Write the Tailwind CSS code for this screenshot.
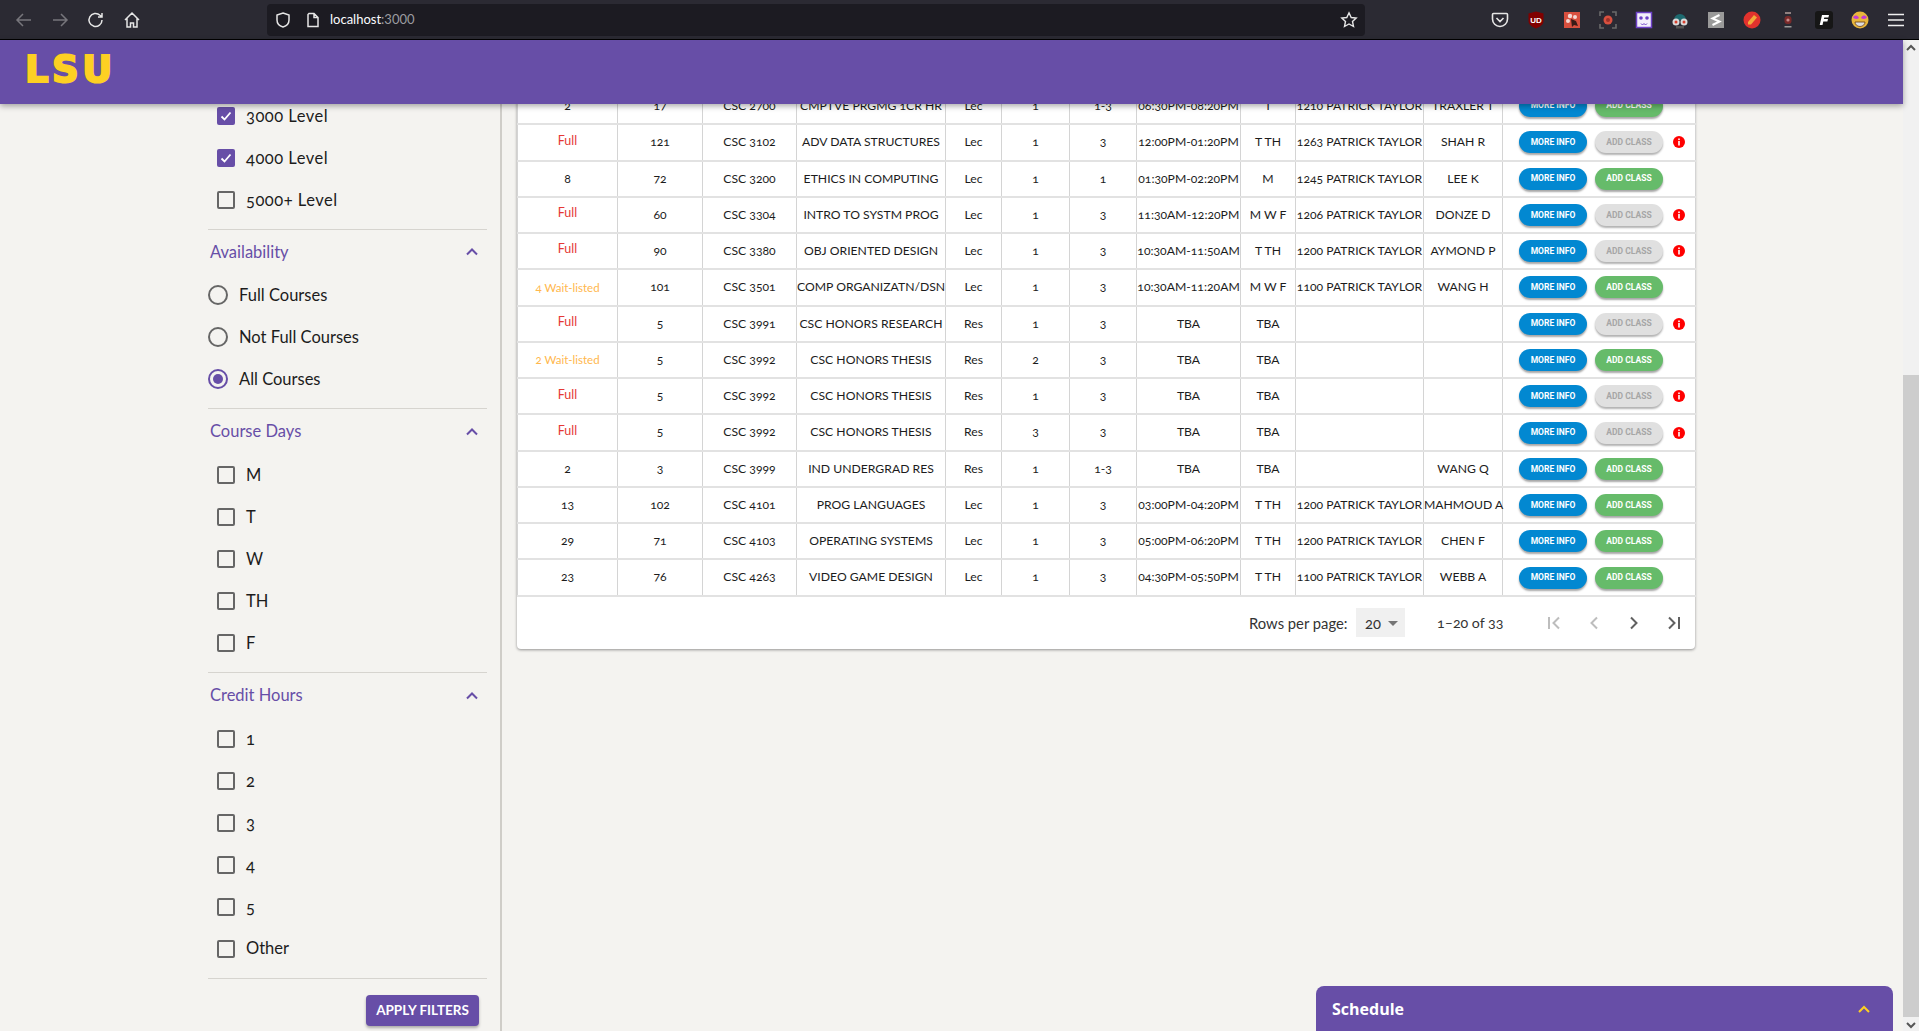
<!DOCTYPE html>
<html><head><meta charset="utf-8"><script src="https://cdn.jsdelivr.net/npm/@tailwindcss/browser@4"></script></head>
<body class="m-0 overflow-hidden bg-[#f4f3f0]">
<div class="flex h-[1031px] w-[1919px] flex-col overflow-hidden font-['Lato',sans-serif] oldstyle-nums text-[#1c1c1c]">
<!-- browser toolbar -->
<div class="flex h-[40px] shrink-0 items-center border-b border-black bg-[#2b2a33] text-[#e6e6e6]">
 <div class="flex w-[267px] items-center gap-[16px] pl-[14px]">
  <svg class="size-[20px] text-[#77767c]" viewBox="0 0 20 20" fill="none" stroke="currentColor" stroke-width="1.5"><path d="M17 10H3M9 4l-6 6 6 6"/></svg>
  <svg class="size-[20px] text-[#77767c]" viewBox="0 0 20 20" fill="none" stroke="currentColor" stroke-width="1.5"><path d="M3 10h14M11 4l6 6-6 6"/></svg>
  <svg class="size-[20px]" viewBox="0 0 20 20" fill="none" stroke="currentColor" stroke-width="1.5"><path d="M16 10a6.5 6.5 0 1 1-2-4.7L16 7M16 3v4h-4"/></svg>
  <svg class="size-[20px]" viewBox="0 0 20 20" fill="none" stroke="currentColor" stroke-width="1.5"><path d="M3 10l7-7 7 7M5 8.500V17h3.500v-4h3v4H15V8.500"/></svg>
 </div>
 <div class="flex h-[32px] w-[1098px] items-center rounded-[4px] bg-[#1c1b22] pl-[7px] pr-[7px]">
  <svg class="size-[18px]" viewBox="0 0 18 18" fill="none" stroke="currentColor" stroke-width="1.500"><path d="M9 2l6 2v5c0 3.500-2.500 6-6 7-3.500-1-6-3.500-6-7V4z"/></svg>
  <svg class="ml-[13px] size-[16px]" viewBox="0 0 16 16" fill="none" stroke="currentColor" stroke-width="1.500"><path d="M4 1.500h5l4 4V14.500H3V2.500zM9 1.500v4h4"/></svg>
  <span class="ml-[9px] text-[13px] lining-nums text-[#fbfbfe]">localhost<span class="text-[#9b9ba0]">:3000</span></span>
  <svg class="ml-auto size-[18px]" viewBox="0 0 18 18" fill="none" stroke="currentColor" stroke-width="1.400"><path d="M9 1.800l2.200 4.700 5 .6-3.700 3.400 1 5L9 13l-4.500 2.500 1-5L1.800 7.100l5-.6z"/></svg>
 </div>
 <div class="ml-[125px] flex items-center gap-[16px]">
  <svg class="size-[20px]" viewBox="0 0 20 20" fill="none" stroke="currentColor" stroke-width="1.600"><path d="M3.500 3.500h13a1 1 0 0 1 1 1V9a7.500 7.500 0 0 1-15 0V4.500a1 1 0 0 1 1-1zM6.500 8l3.500 3.500L13.500 8"/></svg>
  <svg class="size-[20px]" viewBox="0 0 20 20"><path d="M10 1.500l7.500 2v7.500c0 3.500-3 5.500-7.500 7.500-4.500-2-7.500-4-7.500-7.500V3.500z" fill="#800000"/><text x="10" y="12.500" text-anchor="middle" font-size="8" font-weight="700" fill="#fff" font-family="Liberation Sans">UD</text></svg>
  <svg class="size-[20px]" viewBox="0 0 20 20"><rect x="2" y="2" width="16" height="16" fill="#d8503f"/><circle cx="8" cy="6" r="2.200" fill="#f4d9d4"/><circle cx="13" cy="7" r="2" fill="#f4d9d4"/><circle cx="6" cy="11" r="2" fill="#f4d9d4"/><path d="M9 9l5 2 2 5-4-1-2 2z" fill="#3a1b17"/></svg>
  <svg class="size-[20px]" viewBox="0 0 20 20" fill="none"><path d="M2 6V2h4M14 2h4v4M18 14v4h-4M6 18H2v-4" stroke="#6a6a6a" stroke-width="1.600"/><circle cx="10" cy="10" r="4.500" fill="#d8503f"/><circle cx="10" cy="10" r="2" fill="#a03028"/></svg>
  <svg class="size-[20px]" viewBox="0 0 20 20"><rect x="2.500" y="2.500" width="15" height="15" fill="#f3f0fb" stroke="#6d42c7" stroke-width="1.500"/><circle cx="7" cy="8" r="1.800" fill="#6d42c7"/><circle cx="13" cy="8" r="1.800" fill="#6d42c7"/><path d="M7 13.500l1.500 1.500L10 13.500l1.500 1.500L13 13.500" stroke="#6d42c7" fill="none"/></svg>
  <svg class="size-[20px]" viewBox="0 0 20 20"><path d="M4 10a6 6 0 0 1 12 0z" fill="#1d6a70"/><circle cx="6" cy="12" r="3.500" fill="#d9d9d9"/><circle cx="14" cy="12" r="3.500" fill="#d9d9d9"/><circle cx="6" cy="12" r="1.500" fill="#d8402f"/><circle cx="14" cy="12" r="1.500" fill="#d8402f"/><rect x="6" y="16" width="8" height="2.500" fill="#555"/></svg>
  <svg class="size-[20px]" viewBox="0 0 20 20"><rect x="2" y="2" width="16" height="16" fill="#9a9a9a"/><path d="M13.500 5L6.500 8.500l7 3-7 3.500" stroke="#fff" stroke-width="2" fill="none"/></svg>
  <svg class="size-[20px]" viewBox="0 0 20 20"><circle cx="10" cy="10" r="8.500" fill="#e2322d"/><path d="M6 12l6-7 3 2.500-6 7H6z" fill="#f3a93a"/></svg>
  <svg class="size-[20px]" viewBox="0 0 20 20"><rect x="7" y="2" width="6" height="2" fill="#8f8080"/><rect x="6.500" y="6" width="7" height="8" rx="3" fill="#7a2a2a"/><circle cx="10" cy="10" r="1.600" fill="#c88a8a"/><rect x="6.500" y="16" width="7" height="1.500" fill="#999"/></svg>
  <svg class="size-[20px]" viewBox="0 0 20 20"><rect x="1" y="1" width="18" height="18" rx="3" fill="#161616"/><path d="M8 5h7l-.6 2.400H10.300L9.900 9H14l-.6 2.400H9.300L8.500 15H5.700z" fill="#fff"/></svg>
  <svg class="size-[20px]" viewBox="0 0 20 20"><circle cx="10" cy="10" r="8.500" fill="#e8b63c"/><path d="M3 7.500c2-3 5-2.500 6 .5-2 1.500-5 1-6-.5zM17 7.500c-2-3-5-2.500-6 .5 2 1.500 5 1 6-.5z" fill="#c43ad6"/><path d="M5 12h10a5 4.500 0 0 1-10 0z" fill="#ddd" stroke="#6b3d10" stroke-width=".8"/></svg>
  <svg class="size-[20px]" viewBox="0 0 20 20" stroke="#f0f0f0" stroke-width="1.600"><path d="M2 4.500h16M2 10h16M2 15.500h16"/></svg>
 </div>
</div>
<!-- page -->
<div class="relative flex min-h-0 flex-1">
 <div class="relative min-h-0 flex-1">
  <!-- app bar over content -->
  <div class="absolute inset-x-0 top-0 z-20 flex h-[64px] items-center bg-[#674ea7] pb-[5px] pl-[25px] shadow-[0_2px_6px_rgba(0,0,0,0.35)]">
   <span class="font-['DejaVu_Sans',sans-serif] text-[37px] leading-none font-bold tracking-[3.500px] text-[#fdd023] [-webkit-text-stroke:2px_#fdd023]">LSU</span>
  </div>
  <div class="flex h-full overflow-hidden">
   <!-- filters -->
   <aside class="flex h-full w-[502px] shrink-0 flex-col items-end border-r-2 border-[#cfcdc8] pr-[13px] pt-[55px] text-[16.500px]">
    <div class="w-[279px]">
     <div class="flex h-[42px] items-center pl-[9px]"><span class="flex size-[18px] items-center justify-center rounded-[2px] bg-[#674ea7]"><svg class="size-[14px]" viewBox="0 0 14 14" fill="none" stroke="#fff" stroke-width="1.800"><path d="M2.500 7.500l3 3 6-7"/></svg></span><span class="ml-[11px] tracking-[0.5px]">3000 Level</span></div>
     <div class="flex h-[42px] items-center pl-[9px]"><span class="flex size-[18px] items-center justify-center rounded-[2px] bg-[#674ea7]"><svg class="size-[14px]" viewBox="0 0 14 14" fill="none" stroke="#fff" stroke-width="1.800"><path d="M2.500 7.500l3 3 6-7"/></svg></span><span class="ml-[11px] tracking-[0.5px]">4000 Level</span></div>
     <div class="flex h-[42px] items-center pl-[9px]"><span class="size-[18px] rounded-[2px] border-2 border-[#666]"></span><span class="ml-[11px] tracking-[0.5px]">5000+ Level</span></div>
     <div class="mt-[8px] border-t border-[#d6d4cf]"></div>
     <div class="flex h-[44px] items-center justify-between pl-[2px] pr-[8px] text-[#674ea7]"><span>Availability</span><svg class="size-[14px]" viewBox="0 0 14 14" fill="none" stroke="currentColor" stroke-width="2"><path d="M2 9.500L7 4.500l5 5"/></svg></div>
     <div class="flex h-[42px] items-center"><span class="size-[20px] rounded-full border-2 border-[#666]"></span><span class="ml-[11px]">Full Courses</span></div>
     <div class="flex h-[42px] items-center"><span class="size-[20px] rounded-full border-2 border-[#666]"></span><span class="ml-[11px]">Not Full Courses</span></div>
     <div class="flex h-[42px] items-center"><span class="flex size-[20px] items-center justify-center rounded-full border-2 border-[#674ea7]"><span class="size-[10px] rounded-full bg-[#674ea7]"></span></span><span class="ml-[11px]">All Courses</span></div>
     <div class="mt-[8px] border-t border-[#d6d4cf]"></div>
     <div class="flex h-[45px] items-center justify-between pl-[2px] pr-[8px] text-[#674ea7]"><span>Course Days</span><svg class="size-[14px]" viewBox="0 0 14 14" fill="none" stroke="currentColor" stroke-width="2"><path d="M2 9.500L7 4.500l5 5"/></svg></div>
     <div class="flex h-[42px] items-center pl-[9px]"><span class="size-[18px] rounded-[2px] border-2 border-[#666]"></span><span class="ml-[11px]">M</span></div>
     <div class="flex h-[42px] items-center pl-[9px]"><span class="size-[18px] rounded-[2px] border-2 border-[#666]"></span><span class="ml-[11px]">T</span></div>
     <div class="flex h-[42px] items-center pl-[9px]"><span class="size-[18px] rounded-[2px] border-2 border-[#666]"></span><span class="ml-[11px]">W</span></div>
     <div class="flex h-[42px] items-center pl-[9px]"><span class="size-[18px] rounded-[2px] border-2 border-[#666]"></span><span class="ml-[11px]">TH</span></div>
     <div class="flex h-[42px] items-center pl-[9px]"><span class="size-[18px] rounded-[2px] border-2 border-[#666]"></span><span class="ml-[11px]">F</span></div>
     <div class="mt-[8px] border-t border-[#d6d4cf]"></div>
     <div class="flex h-[45px] items-center justify-between pl-[2px] pr-[8px] text-[#674ea7]"><span>Credit Hours</span><svg class="size-[14px]" viewBox="0 0 14 14" fill="none" stroke="currentColor" stroke-width="2"><path d="M2 9.500L7 4.500l5 5"/></svg></div>
     <div class="flex h-[42px] items-center pl-[9px]"><span class="size-[18px] rounded-[2px] border-2 border-[#666]"></span><span class="ml-[11px]">1</span></div>
     <div class="flex h-[42px] items-center pl-[9px]"><span class="size-[18px] rounded-[2px] border-2 border-[#666]"></span><span class="ml-[11px]">2</span></div>
     <div class="flex h-[42px] items-center pl-[9px]"><span class="size-[18px] rounded-[2px] border-2 border-[#666]"></span><span class="ml-[11px]">3</span></div>
     <div class="flex h-[42px] items-center pl-[9px]"><span class="size-[18px] rounded-[2px] border-2 border-[#666]"></span><span class="ml-[11px]">4</span></div>
     <div class="flex h-[42px] items-center pl-[9px]"><span class="size-[18px] rounded-[2px] border-2 border-[#666]"></span><span class="ml-[11px]">5</span></div>
     <div class="flex h-[41px] items-center pl-[9px]"><span class="size-[18px] rounded-[2px] border-2 border-[#666]"></span><span class="ml-[11px]">Other</span></div>
     <div class="mt-[9px] border-t border-[#d6d4cf]"></div>
     <div class="flex justify-end pr-[8px] pt-[16px]"><span class="flex h-[31px] w-[113px] items-center justify-center rounded-[4px] bg-[#674ea7] text-[13.500px] font-bold text-white shadow-[0_2px_3px_rgba(0,0,0,0.3)]">APPLY FILTERS</span></div>
    </div>
   </aside>
   <!-- results -->
   <main class="min-w-0 flex-1 pl-[15px] pt-[48px]">
    <div class="w-[1178px] rounded-b-[4px] bg-white shadow-[0_1px_3px_rgba(0,0,0,0.4)]">
     <table class="w-full table-fixed border-collapse text-center text-[12.200px] leading-none [&_td]:whitespace-nowrap [&_td]:border-x [&_td]:border-x-[#d4d4d4] [&_tr]:h-[36.280px] [&_tr]:border-b-2 [&_tr]:border-b-[#e2e2e2]">
      <colgroup><col class="w-[100px]"><col class="w-[85px]"><col class="w-[94px]"><col class="w-[149px]"><col class="w-[56px]"><col class="w-[68px]"><col class="w-[67px]"><col class="w-[104px]"><col class="w-[55px]"><col class="w-[128px]"><col class="w-[79px]"><col class="w-[193px]"></colgroup>
      <tbody>
       <tr><td>2</td><td>17</td><td>CSC 2700</td><td>CMPTVE PRGMG 1CR HR</td><td>Lec</td><td>1</td><td>1-3</td><td>06:30PM-08:20PM</td><td>T</td><td>1210 PATRICK TAYLOR</td><td>TRAXLER T</td><td><div class="flex items-center gap-[8px] pl-[16px]"><span class="flex h-[22px] w-[68px] items-center justify-center rounded-full bg-[#0288d1] font-['Roboto',sans-serif] text-[8.500px] font-bold text-white shadow-[0_2px_2px_rgba(0,0,0,0.35)]">MORE INFO</span><span class="flex h-[22px] w-[68px] items-center justify-center rounded-full bg-[#66bb6a] font-['Roboto',sans-serif] text-[8.500px] font-bold text-white shadow-[0_2px_2px_rgba(0,0,0,0.35)]">ADD CLASS</span></div></td></tr>
       <tr><td class="pb-[3px] text-[12.500px] text-[#e53935]">Full</td><td>121</td><td>CSC 3102</td><td>ADV DATA STRUCTURES</td><td>Lec</td><td>1</td><td>3</td><td>12:00PM-01:20PM</td><td>T TH</td><td>1263 PATRICK TAYLOR</td><td>SHAH R</td><td><div class="flex items-center gap-[8px] pl-[16px]"><span class="flex h-[22px] w-[68px] items-center justify-center rounded-full bg-[#0288d1] font-['Roboto',sans-serif] text-[8.500px] font-bold text-white shadow-[0_2px_2px_rgba(0,0,0,0.35)]">MORE INFO</span><span class="flex h-[22px] w-[68px] items-center justify-center rounded-full bg-[#e0e0e0] font-['Roboto',sans-serif] text-[8.500px] font-bold text-[#a6a6a6] shadow-[0_2px_2px_rgba(0,0,0,0.3)]">ADD CLASS</span><svg class="ml-[2px] size-[12px]" viewBox="0 0 12 12"><circle cx="6" cy="6" r="6" fill="#f00"/><rect x="5.200" y="5" width="1.600" height="4.500" fill="#fff"/><rect x="5.200" y="2.500" width="1.600" height="1.600" fill="#fff"/></svg></div></td></tr>
       <tr><td>8</td><td>72</td><td>CSC 3200</td><td>ETHICS IN COMPUTING</td><td>Lec</td><td>1</td><td>1</td><td>01:30PM-02:20PM</td><td>M</td><td>1245 PATRICK TAYLOR</td><td>LEE K</td><td><div class="flex items-center gap-[8px] pl-[16px]"><span class="flex h-[22px] w-[68px] items-center justify-center rounded-full bg-[#0288d1] font-['Roboto',sans-serif] text-[8.500px] font-bold text-white shadow-[0_2px_2px_rgba(0,0,0,0.35)]">MORE INFO</span><span class="flex h-[22px] w-[68px] items-center justify-center rounded-full bg-[#66bb6a] font-['Roboto',sans-serif] text-[8.500px] font-bold text-white shadow-[0_2px_2px_rgba(0,0,0,0.35)]">ADD CLASS</span></div></td></tr>
       <tr><td class="pb-[3px] text-[12.500px] text-[#e53935]">Full</td><td>60</td><td>CSC 3304</td><td>INTRO TO SYSTM PROG</td><td>Lec</td><td>1</td><td>3</td><td>11:30AM-12:20PM</td><td>M W F</td><td>1206 PATRICK TAYLOR</td><td>DONZE D</td><td><div class="flex items-center gap-[8px] pl-[16px]"><span class="flex h-[22px] w-[68px] items-center justify-center rounded-full bg-[#0288d1] font-['Roboto',sans-serif] text-[8.500px] font-bold text-white shadow-[0_2px_2px_rgba(0,0,0,0.35)]">MORE INFO</span><span class="flex h-[22px] w-[68px] items-center justify-center rounded-full bg-[#e0e0e0] font-['Roboto',sans-serif] text-[8.500px] font-bold text-[#a6a6a6] shadow-[0_2px_2px_rgba(0,0,0,0.3)]">ADD CLASS</span><svg class="ml-[2px] size-[12px]" viewBox="0 0 12 12"><circle cx="6" cy="6" r="6" fill="#f00"/><rect x="5.200" y="5" width="1.600" height="4.500" fill="#fff"/><rect x="5.200" y="2.500" width="1.600" height="1.600" fill="#fff"/></svg></div></td></tr>
       <tr><td class="pb-[3px] text-[12.500px] text-[#e53935]">Full</td><td>90</td><td>CSC 3380</td><td>OBJ ORIENTED DESIGN</td><td>Lec</td><td>1</td><td>3</td><td>10:30AM-11:50AM</td><td>T TH</td><td>1200 PATRICK TAYLOR</td><td>AYMOND P</td><td><div class="flex items-center gap-[8px] pl-[16px]"><span class="flex h-[22px] w-[68px] items-center justify-center rounded-full bg-[#0288d1] font-['Roboto',sans-serif] text-[8.500px] font-bold text-white shadow-[0_2px_2px_rgba(0,0,0,0.35)]">MORE INFO</span><span class="flex h-[22px] w-[68px] items-center justify-center rounded-full bg-[#e0e0e0] font-['Roboto',sans-serif] text-[8.500px] font-bold text-[#a6a6a6] shadow-[0_2px_2px_rgba(0,0,0,0.3)]">ADD CLASS</span><svg class="ml-[2px] size-[12px]" viewBox="0 0 12 12"><circle cx="6" cy="6" r="6" fill="#f00"/><rect x="5.200" y="5" width="1.600" height="4.500" fill="#fff"/><rect x="5.200" y="2.500" width="1.600" height="1.600" fill="#fff"/></svg></div></td></tr>
       <tr><td class="text-[11.500px] text-[#ffb74d]">4 Wait-listed</td><td>101</td><td>CSC 3501</td><td>COMP ORGANIZATN/DSN</td><td>Lec</td><td>1</td><td>3</td><td>10:30AM-11:20AM</td><td>M W F</td><td>1100 PATRICK TAYLOR</td><td>WANG H</td><td><div class="flex items-center gap-[8px] pl-[16px]"><span class="flex h-[22px] w-[68px] items-center justify-center rounded-full bg-[#0288d1] font-['Roboto',sans-serif] text-[8.500px] font-bold text-white shadow-[0_2px_2px_rgba(0,0,0,0.35)]">MORE INFO</span><span class="flex h-[22px] w-[68px] items-center justify-center rounded-full bg-[#66bb6a] font-['Roboto',sans-serif] text-[8.500px] font-bold text-white shadow-[0_2px_2px_rgba(0,0,0,0.35)]">ADD CLASS</span></div></td></tr>
       <tr><td class="pb-[3px] text-[12.500px] text-[#e53935]">Full</td><td>5</td><td>CSC 3991</td><td>CSC HONORS RESEARCH</td><td>Res</td><td>1</td><td>3</td><td>TBA</td><td>TBA</td><td></td><td></td><td><div class="flex items-center gap-[8px] pl-[16px]"><span class="flex h-[22px] w-[68px] items-center justify-center rounded-full bg-[#0288d1] font-['Roboto',sans-serif] text-[8.500px] font-bold text-white shadow-[0_2px_2px_rgba(0,0,0,0.35)]">MORE INFO</span><span class="flex h-[22px] w-[68px] items-center justify-center rounded-full bg-[#e0e0e0] font-['Roboto',sans-serif] text-[8.500px] font-bold text-[#a6a6a6] shadow-[0_2px_2px_rgba(0,0,0,0.3)]">ADD CLASS</span><svg class="ml-[2px] size-[12px]" viewBox="0 0 12 12"><circle cx="6" cy="6" r="6" fill="#f00"/><rect x="5.200" y="5" width="1.600" height="4.500" fill="#fff"/><rect x="5.200" y="2.500" width="1.600" height="1.600" fill="#fff"/></svg></div></td></tr>
       <tr><td class="text-[11.500px] text-[#ffb74d]">2 Wait-listed</td><td>5</td><td>CSC 3992</td><td>CSC HONORS THESIS</td><td>Res</td><td>2</td><td>3</td><td>TBA</td><td>TBA</td><td></td><td></td><td><div class="flex items-center gap-[8px] pl-[16px]"><span class="flex h-[22px] w-[68px] items-center justify-center rounded-full bg-[#0288d1] font-['Roboto',sans-serif] text-[8.500px] font-bold text-white shadow-[0_2px_2px_rgba(0,0,0,0.35)]">MORE INFO</span><span class="flex h-[22px] w-[68px] items-center justify-center rounded-full bg-[#66bb6a] font-['Roboto',sans-serif] text-[8.500px] font-bold text-white shadow-[0_2px_2px_rgba(0,0,0,0.35)]">ADD CLASS</span></div></td></tr>
       <tr><td class="pb-[3px] text-[12.500px] text-[#e53935]">Full</td><td>5</td><td>CSC 3992</td><td>CSC HONORS THESIS</td><td>Res</td><td>1</td><td>3</td><td>TBA</td><td>TBA</td><td></td><td></td><td><div class="flex items-center gap-[8px] pl-[16px]"><span class="flex h-[22px] w-[68px] items-center justify-center rounded-full bg-[#0288d1] font-['Roboto',sans-serif] text-[8.500px] font-bold text-white shadow-[0_2px_2px_rgba(0,0,0,0.35)]">MORE INFO</span><span class="flex h-[22px] w-[68px] items-center justify-center rounded-full bg-[#e0e0e0] font-['Roboto',sans-serif] text-[8.500px] font-bold text-[#a6a6a6] shadow-[0_2px_2px_rgba(0,0,0,0.3)]">ADD CLASS</span><svg class="ml-[2px] size-[12px]" viewBox="0 0 12 12"><circle cx="6" cy="6" r="6" fill="#f00"/><rect x="5.200" y="5" width="1.600" height="4.500" fill="#fff"/><rect x="5.200" y="2.500" width="1.600" height="1.600" fill="#fff"/></svg></div></td></tr>
       <tr><td class="pb-[3px] text-[12.500px] text-[#e53935]">Full</td><td>5</td><td>CSC 3992</td><td>CSC HONORS THESIS</td><td>Res</td><td>3</td><td>3</td><td>TBA</td><td>TBA</td><td></td><td></td><td><div class="flex items-center gap-[8px] pl-[16px]"><span class="flex h-[22px] w-[68px] items-center justify-center rounded-full bg-[#0288d1] font-['Roboto',sans-serif] text-[8.500px] font-bold text-white shadow-[0_2px_2px_rgba(0,0,0,0.35)]">MORE INFO</span><span class="flex h-[22px] w-[68px] items-center justify-center rounded-full bg-[#e0e0e0] font-['Roboto',sans-serif] text-[8.500px] font-bold text-[#a6a6a6] shadow-[0_2px_2px_rgba(0,0,0,0.3)]">ADD CLASS</span><svg class="ml-[2px] size-[12px]" viewBox="0 0 12 12"><circle cx="6" cy="6" r="6" fill="#f00"/><rect x="5.200" y="5" width="1.600" height="4.500" fill="#fff"/><rect x="5.200" y="2.500" width="1.600" height="1.600" fill="#fff"/></svg></div></td></tr>
       <tr><td>2</td><td>3</td><td>CSC 3999</td><td>IND UNDERGRAD RES</td><td>Res</td><td>1</td><td>1-3</td><td>TBA</td><td>TBA</td><td></td><td>WANG Q</td><td><div class="flex items-center gap-[8px] pl-[16px]"><span class="flex h-[22px] w-[68px] items-center justify-center rounded-full bg-[#0288d1] font-['Roboto',sans-serif] text-[8.500px] font-bold text-white shadow-[0_2px_2px_rgba(0,0,0,0.35)]">MORE INFO</span><span class="flex h-[22px] w-[68px] items-center justify-center rounded-full bg-[#66bb6a] font-['Roboto',sans-serif] text-[8.500px] font-bold text-white shadow-[0_2px_2px_rgba(0,0,0,0.35)]">ADD CLASS</span></div></td></tr>
       <tr><td>13</td><td>102</td><td>CSC 4101</td><td>PROG LANGUAGES</td><td>Lec</td><td>1</td><td>3</td><td>03:00PM-04:20PM</td><td>T TH</td><td>1200 PATRICK TAYLOR</td><td>MAHMOUD A</td><td><div class="flex items-center gap-[8px] pl-[16px]"><span class="flex h-[22px] w-[68px] items-center justify-center rounded-full bg-[#0288d1] font-['Roboto',sans-serif] text-[8.500px] font-bold text-white shadow-[0_2px_2px_rgba(0,0,0,0.35)]">MORE INFO</span><span class="flex h-[22px] w-[68px] items-center justify-center rounded-full bg-[#66bb6a] font-['Roboto',sans-serif] text-[8.500px] font-bold text-white shadow-[0_2px_2px_rgba(0,0,0,0.35)]">ADD CLASS</span></div></td></tr>
       <tr><td>29</td><td>71</td><td>CSC 4103</td><td>OPERATING SYSTEMS</td><td>Lec</td><td>1</td><td>3</td><td>05:00PM-06:20PM</td><td>T TH</td><td>1200 PATRICK TAYLOR</td><td>CHEN F</td><td><div class="flex items-center gap-[8px] pl-[16px]"><span class="flex h-[22px] w-[68px] items-center justify-center rounded-full bg-[#0288d1] font-['Roboto',sans-serif] text-[8.500px] font-bold text-white shadow-[0_2px_2px_rgba(0,0,0,0.35)]">MORE INFO</span><span class="flex h-[22px] w-[68px] items-center justify-center rounded-full bg-[#66bb6a] font-['Roboto',sans-serif] text-[8.500px] font-bold text-white shadow-[0_2px_2px_rgba(0,0,0,0.35)]">ADD CLASS</span></div></td></tr>
       <tr><td>23</td><td>76</td><td>CSC 4263</td><td>VIDEO GAME DESIGN</td><td>Lec</td><td>1</td><td>3</td><td>04:30PM-05:50PM</td><td>T TH</td><td>1100 PATRICK TAYLOR</td><td>WEBB A</td><td><div class="flex items-center gap-[8px] pl-[16px]"><span class="flex h-[22px] w-[68px] items-center justify-center rounded-full bg-[#0288d1] font-['Roboto',sans-serif] text-[8.500px] font-bold text-white shadow-[0_2px_2px_rgba(0,0,0,0.35)]">MORE INFO</span><span class="flex h-[22px] w-[68px] items-center justify-center rounded-full bg-[#66bb6a] font-['Roboto',sans-serif] text-[8.500px] font-bold text-white shadow-[0_2px_2px_rgba(0,0,0,0.35)]">ADD CLASS</span></div></td></tr>
      </tbody>
     </table>
     <div class="flex h-[52px] items-center pl-[732px] text-[14.800px] text-[#333]">
      <span class="w-[107px] whitespace-nowrap">Rows per page:</span>
      <span class="flex h-[29px] w-[49px] items-center justify-between bg-[#f0f0f0] pl-[9px] pr-[7px]">20<svg class="size-[10px]" viewBox="0 0 10 10"><path d="M0 3h10L5 8z" fill="#757575"/></svg></span>
      <span class="ml-[32px] w-[64px] whitespace-nowrap text-[14.200px]">1–20 of 33</span>
      <div class="ml-[44px] flex items-center gap-[22px]">
       <svg class="size-[18px] text-[#bdbdbd]" viewBox="0 0 18 18" fill="none" stroke="currentColor" stroke-width="2"><path d="M4 3v12M14 3.500L8.500 9l5.500 5.500"/></svg>
       <svg class="size-[18px] text-[#bdbdbd]" viewBox="0 0 18 18" fill="none" stroke="currentColor" stroke-width="2"><path d="M12 3.500L6.500 9l5.500 5.500"/></svg>
       <svg class="size-[18px] text-[#616161]" viewBox="0 0 18 18" fill="none" stroke="currentColor" stroke-width="2"><path d="M6 3.500L11.500 9 6 14.500"/></svg>
       <svg class="size-[18px] text-[#616161]" viewBox="0 0 18 18" fill="none" stroke="currentColor" stroke-width="2"><path d="M14 3v12M4 3.500L9.500 9 4 14.500"/></svg>
      </div>
     </div>
    </div>
   </main>
  </div>
  <!-- schedule dock -->
  <div class="absolute bottom-0 right-[10px] z-10 flex h-[45px] w-[577px] items-center justify-between rounded-t-[8px] bg-[#674ea7] pl-[16px] pr-[22px] font-['Open_Sans',sans-serif] text-[16px] font-bold text-white">
   <span>Schedule</span>
   <svg class="size-[14px]" viewBox="0 0 14 14" fill="none" stroke="#fdd023" stroke-width="2"><path d="M2 10l5-5 5 5"/></svg>
  </div>
 </div>
 <!-- page scrollbar -->
 <div class="flex w-[16px] shrink-0 flex-col items-center bg-[#f1f1f1]">
  <svg class="mt-[2px] size-[12px]" viewBox="0 0 12 12" fill="none" stroke="#555" stroke-width="2"><path d="M2 8l4-4 4 4"/></svg>
  <div class="mt-[321px] h-[643px] w-full bg-[#cdcdcd]"></div>
  <svg class="mt-[2px] size-[12px]" viewBox="0 0 12 12" fill="none" stroke="#555" stroke-width="2"><path d="M2 4l4 4 4-4"/></svg>
 </div>
</div>
</div>
</body></html>
